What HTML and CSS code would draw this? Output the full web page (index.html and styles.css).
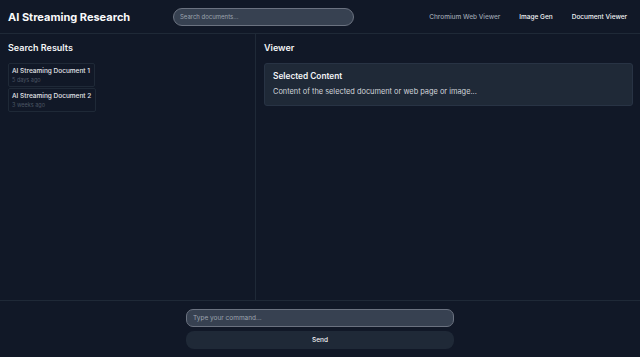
FILE: index.html
```html
<!DOCTYPE html>
<html lang="en">
<head>
    <meta charset="UTF-8">
    <meta name="viewport" content="width=device-width, initial-scale=1.0">
    <title>AI Streaming Research</title>
    <link rel="stylesheet" href="styles.css">
</head>
<body>

    <div class="app">
        <header class="topbar">
            <h1 class="title">AI Streaming Research</h1>
            <input class="search" type="text" placeholder="Search documents...">
            <nav class="nav">
                <a class="nav-link muted" href="#">Chromium Web Viewer</a>
                <a class="nav-link" href="#">Image Gen</a>
                <a class="nav-link" href="#">Document Viewer</a>
            </nav>
        </header>

        <main class="main">
            <section class="results">
                <h2 class="section-title">Search Results</h2>
                <div class="doc-list">
                    <div class="doc">
                        <div class="doc-name">AI Streaming Document 1</div>
                        <div class="doc-date">5 days ago</div>
                    </div>
                    <div class="doc">
                        <div class="doc-name">AI Streaming Document 2</div>
                        <div class="doc-date">3 weeks ago</div>
                    </div>
                </div>
            </section>

            <section class="viewer">
                <h2 class="section-title">Viewer</h2>
                <div class="viewer-card">
                    <h3 class="viewer-title">Selected Content</h3>
                    <p class="viewer-text">Content of the selected document or web page or image...</p>
                </div>
            </section>
        </main>

        <footer class="composer">
            <input class="command" type="text" placeholder="Type your command...">
            <button class="send">Send</button>
        </footer>
    </div>

</body>
</html>
```

FILE: styles.css
```css
* {
    box-sizing: border-box;
}

body {
    margin: 0;
    background-color: #111827;
    color: #f3f4f6;
    font-family: Inter, "Noto Sans", sans-serif;
}

.app {
    display: flex;
    flex-direction: column;
    height: 357px;
}

.topbar {
    display: flex;
    align-items: center;
    height: 34px;
    padding: 0 8px;
    border-bottom: 1px solid #1f2937;
}

.title {
    margin: 0;
    font-size: 11px;
    font-weight: 700;
    color: #f9fafb;
    width: 165px;
}

.search {
    width: 181px;
    height: 18px;
    border-radius: 9px;
    border: 1px solid #6b7280;
    background-color: #374151;
    padding: 0 6px;
    font-family: inherit;
    font-size: 6px;
    color: #e5e7eb;
}

.search::placeholder,
.command::placeholder {
    color: #9ca3af;
}

.nav {
    margin-left: auto;
    display: flex;
    gap: 19px;
    padding-right: 5px;
}

.nav-link {
    color: #f3f4f6;
    text-decoration: none;
    font-size: 6.5px;
    font-weight: 500;
}

.nav-link.muted {
    color: #9ca3af;
}

.main {
    flex: 1;
    display: flex;
}

.results {
    width: 256px;
    border-right: 1px solid #1f2937;
    padding: 8px;
}

.viewer {
    flex: 1;
    padding: 8px 7px 8px 8px;
}

.section-title {
    margin: 0 0 9px;
    font-size: 9px;
    font-weight: 600;
    color: #f3f4f6;
    line-height: 12px;
}

.doc-list {
    display: flex;
    flex-direction: column;
    align-items: flex-start;
    gap: 1px;
}

.doc {
    border: 1px solid #1f2937;
    border-radius: 2px;
    padding: 2px 4px 2px 3px;
    white-space: nowrap;
}

.doc-name {
    font-size: 6.5px;
    font-weight: 500;
    color: #e5e7eb;
    line-height: 10px;
}

.doc-date {
    font-size: 5.5px;
    color: #4b5563;
    line-height: 8px;
}

.viewer-card {
    background-color: #1f2937;
    border: 1px solid #283344;
    border-radius: 3px;
    padding: 6px 8px;
    height: 43px;
}

.viewer-title {
    margin: 0 0 5px;
    font-size: 8.3px;
    font-weight: 600;
    color: #f3f4f6;
    line-height: 12px;
}

.viewer-text {
    margin: 0;
    font-size: 7.4px;
    color: #d1d5db;
    line-height: 10px;
}

.composer {
    border-top: 1px solid #1f2937;
    padding: 8px 0;
    display: flex;
    flex-direction: column;
    align-items: center;
    gap: 4px;
    height: 57px;
}

.command {
    width: 268px;
    height: 19px;
    border-radius: 7px;
    border: 1px solid #6b7280;
    background-color: #374151;
    padding: 0 6px;
    font-family: inherit;
    font-size: 6.5px;
    color: #e5e7eb;
}

.send {
    width: 268px;
    height: 19px;
    border-radius: 8px;
    border: none;
    background-color: #1f2937;
    color: #f3f4f6;
    font-family: inherit;
    font-size: 6.5px;
    font-weight: 500;
    cursor: pointer;
}
```
